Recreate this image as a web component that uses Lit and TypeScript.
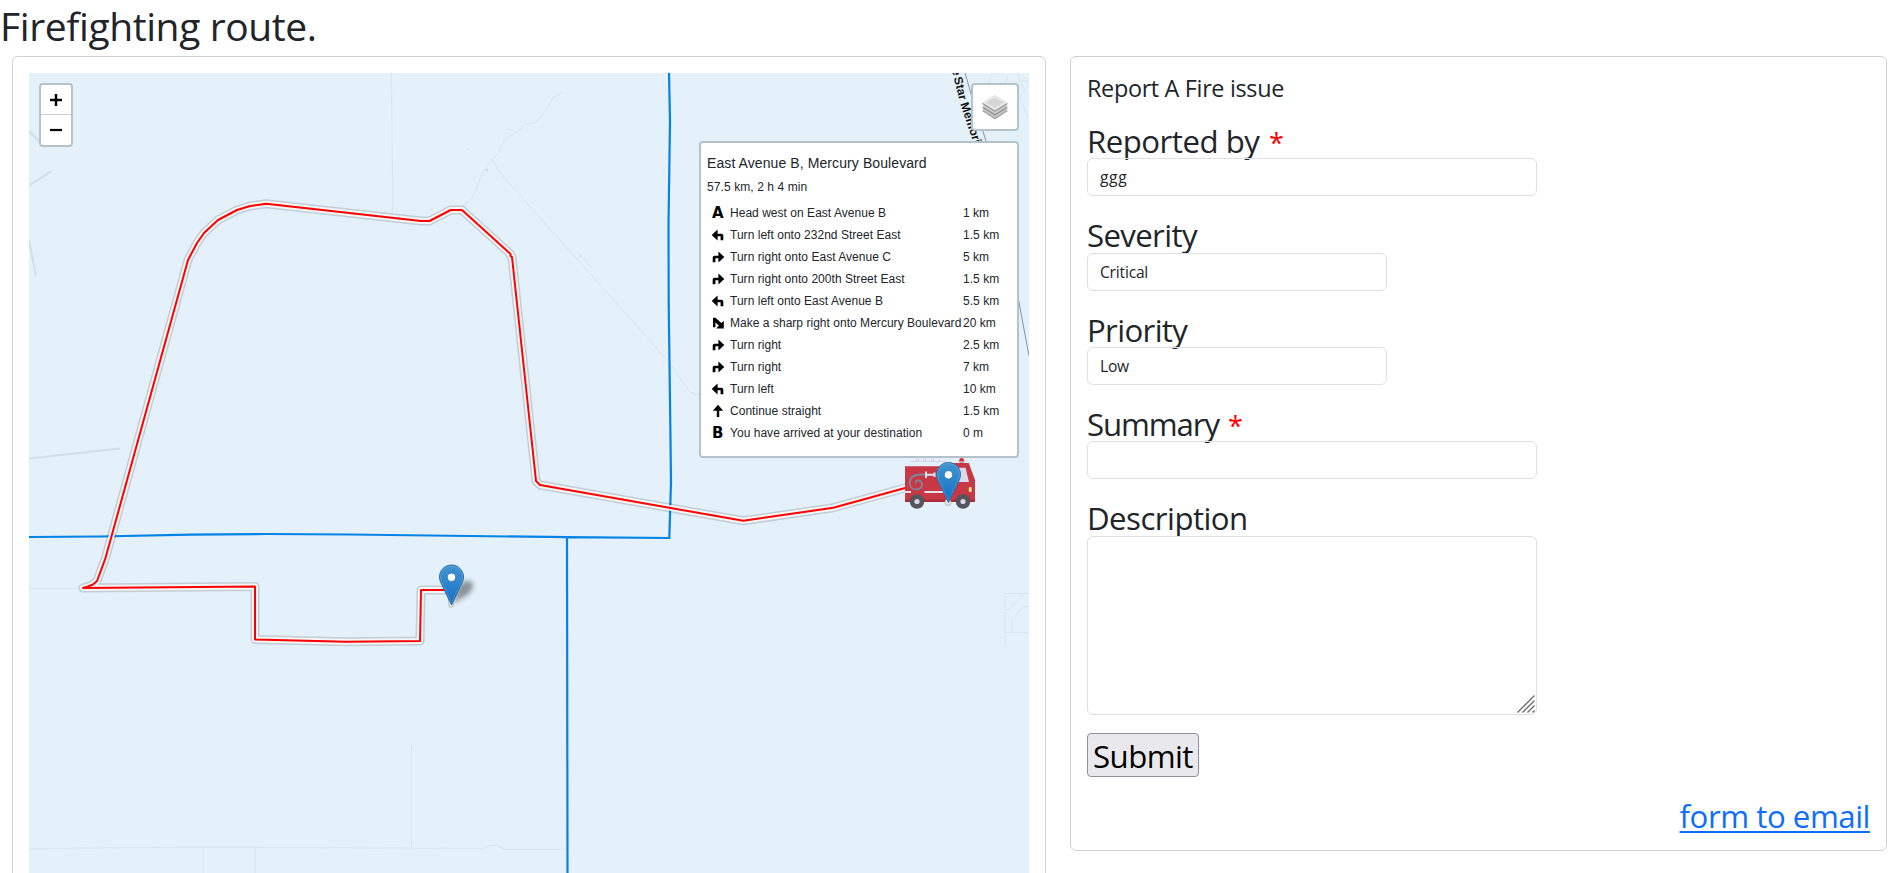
import {LitElement, html, css, svg} from "lit"
import {customElement, property} from "lit/decorators.js"

const ROUTE = "M938 479L905 488L833.3 507.7L743.3 520.8L540 485L536 481L512 257L510.5 256V254L462 210H450.7L429.5 221H421L266 203.7L250 206L237 210L218 220L204 233L197 243L188 260L105.4 558.3L97 581L93 584.5L88 586.5L83 588L255 586.5V639.5L346 641.8L420 641L421 590H451"

// Leaflet Routing Machine draws each leg three times: shadow, white casing, line
const ROUTE_STYLES = [
    {color: "#000", opacity: 0.15, weight: 9},
    {color: "#fff", opacity: 0.8, weight: 6},
    {color: "#f00", opacity: 1, weight: 2},
]

const STEPS = [
    {icon: "depart", text: "Head west on East Avenue B", distance: "1 km"},
    {icon: "left", text: "Turn left onto 232nd Street East", distance: "1.5 km"},
    {icon: "right", text: "Turn right onto East Avenue C", distance: "5 km"},
    {icon: "right", text: "Turn right onto 200th Street East", distance: "1.5 km"},
    {icon: "left", text: "Turn left onto East Avenue B", distance: "5.5 km"},
    {icon: "sharp-right", text: "Make a sharp right onto Mercury Boulevard", distance: "20 km"},
    {icon: "right", text: "Turn right", distance: "2.5 km"},
    {icon: "right", text: "Turn right", distance: "7 km"},
    {icon: "left", text: "Turn left", distance: "10 km"},
    {icon: "straight", text: "Continue straight", distance: "1.5 km"},
    {icon: "arrive", text: "You have arrived at your destination", distance: "0 m"},
]

const STEP_PATHS: any = {
    "left": "M-.3 5L5.600 -.4V3.700H9.500Q11.300 3.700 11.300 5.500V10.200H8.600V6.300H5.600V10.400Z",
    "right": "M12.300 5L6.400 -.4V3.700H2.500Q.7 3.700 .7 5.500V10.200H3.400V6.300H6.400V10.400Z",
    "sharp-right": "M1 -.3L3.400 -.3L9.400 5L11.800 2.800V10.400H4.200L6.900 7.600L3.400 4.600V9.200H1Z",
    "straight": "M6 -1.200L11.200 4.800H7.200V11H4.800V4.800H.8Z",
}

@customElement('step-icon')
export class StepIcon extends LitElement {
    static styles = css`
        :host {
            display: block;
            width: 12px;
            height: 22px;
            font: bold 15px/22px "DejaVu Sans", sans-serif;
            color: #000;
        }
        svg {
            display: block;
            width: 12px;
            height: 10px;
            padding-top: 6px;
            overflow: visible;
        }
    `;

    @property()
    type = ""

    render() {
        if (this.type === "depart") return html`A`
        if (this.type === "arrive") return html`B`
        return html`<svg viewBox="0 0 12 10"><path d=${STEP_PATHS[this.type]} /></svg>`
    }
}

@customElement('route-map')
export class RouteMap extends LitElement {
    static styles = css`
        :host {
            display: block;
            position: relative;
            height: 100%;
            overflow: hidden;
            background: #e4f1fa;
            color: #212529;
            font: 12px/18px "Liberation Sans", Arial, sans-serif;
        }
        .tiles {
            display: block;
            width: 1000px;
            height: 800px;
        }
        .road-name {
            font: bold 12px "Liberation Sans", Arial, sans-serif;
            fill: #111;
            stroke: #e4f1fa;
            stroke-width: 2px;
            paint-order: stroke;
        }
        .controls {
            position: absolute;
            top: 10px;
            border: 2px solid #b6c2ca;
            border-radius: 4px;
            box-sizing: border-box;
            background: #fff;
        }
        .zoom {
            left: 10px;
            width: 34px;
            height: 64px;
        }
        .zoom span {
            display: flex;
            align-items: center;
            justify-content: center;
            box-sizing: border-box;
            height: 30px;
        }
        .zoom span:first-child {
            border-bottom: 1px solid #ccc;
        }
        .zoom svg {
            width: 14px;
            height: 14px;
        }
        .layers {
            right: 10px;
            width: 48px;
            height: 48px;
            display: flex;
            align-items: center;
            justify-content: center;
        }
        .layers svg {
            width: 26px;
            height: 26px;
        }
        .directions {
            top: 68px;
            right: 10px;
            width: 320px;
            height: 317px;
            padding: 11px 6px;
        }
        h2 {
            margin: 0;
            font-weight: normal;
            font-size: 14px;
            line-height: 18px;
            letter-spacing: 0.09px;
        }
        h3 {
            margin: 6px 0;
            font-weight: normal;
            font-size: 12px;
            line-height: 18px;
            letter-spacing: 0.09px;
        }
        .step {
            display: grid;
            grid-template-columns: 18px 233px auto;
            padding-left: 5px;
            line-height: 22px;
            letter-spacing: 0.03px;
            white-space: nowrap;
        }
    `;

    pin(x: number, y: number) {
        return svg`
            <g transform="translate(${x} ${y})">
                <path d="M12.5.5C5.800.5.500 5.900.500 12.500c0 3 1.100 5.300 2.200 7.500L12.500 40.500l9.800-20.500c1.100-2.200 2.200-4.500 2.200-7.500C24.500 5.900 19.200.5 12.500.5z" fill="url(#pin)" stroke="#2e6fa3" />
                <path d="M12.500 1.600C6.400 1.600 1.600 6.500 1.600 12.500c0 2.700 1 4.900 2.100 7L12.500 38l8.800-18.500c1.100-2.100 2.100-4.300 2.100-7C23.400 6.500 18.600 1.600 12.500 1.600z" fill="none" stroke="#fff" stroke-opacity=".15" />
                <circle cx="12.500" cy="12.800" r="4.300" fill="#fff" stroke="#2f79b5" />
            </g>`
    }

    truck() {
        return svg`
            <g transform="translate(905 440)">
                <g fill="none" stroke="#d8d2ea">
                    <path d="M5 21.500H41M11.500 12V21M18.500 12V21M26.500 12V21M34.500 12V21" />
                    <path d="M13.500 16V21M20.500 16V21M28.500 16V21" />
                </g>
                <path d="M54.300 22V20.300Q54.300 18 56.600 18T59 20.300V22Z" fill="#f4202b" />
                <path d="M55 21H58.500V23.500H55Z" fill="#b9a6bb" />
                <path d="M0 26.300H44V23H63.800L70 40V62H0Z" fill="#c83745" />
                <path d="M0 59.500H70V62H0Z" fill="#ad2c3b" />
                <path d="M54 27.800H60.500L64 42H54Z" fill="#dcd9ea" />
                <path d="M0 51H6V53H0ZM19.500 51H38V53H19.500Z" fill="#e6e1f0" />
                <path d="M22 34.500H15Q4.500 35 4.700 43.500Q5.500 49.500 11.500 49.500Q17.300 49 17 44Q16 40 12.500 40.300Q10 41 11 43.500" fill="none" stroke="#7b8796" stroke-width="1.800" />
                <path d="M21 31.500V38M21 34.700H30M29.500 32.500V37" fill="none" stroke="#e6e1f0" stroke-width="2" />
                <rect x="63.800" y="47" width="2.800" height="5" rx="1" fill="#fbe87c" />
                <circle cx="12" cy="61.500" r="7.300" fill="#56555c" />
                <circle cx="12" cy="61.500" r="2.600" fill="#dad6e8" />
                <circle cx="58" cy="61.500" r="7.300" fill="#56555c" />
                <circle cx="58" cy="61.500" r="2.600" fill="#dad6e8" />
            </g>`
    }

    render() {
        return html`
            <svg class="tiles" viewBox="29 73 1000 800">
                <defs>
                    <linearGradient id="pin" x1="0" y1="0" x2="0" y2="1">
                        <stop offset="0" stop-color="#4295d1" />
                        <stop offset="1" stop-color="#126fc6" />
                    </linearGradient>
                    <filter id="soft" x="-50%" y="-50%" width="200%" height="200%">
                        <feGaussianBlur stdDeviation="2.800" />
                    </filter>
                </defs>

                <g fill="none" stroke="#d8e5ed" stroke-width="1">
                    <path d="M391.500 73L392.700 213M563 92L553 98L547 109L537 121Q534 124 525 124L517 132L505 139Q501 145 499 153L492 160L484 170L473 196Q468 204 462 206" />
                    <path d="M492 159Q497 170 501 174L668 361L690 392Q694 395 700 394M577 260L582 254M580 254L592 268M507 129L514 130.500M465 151L469 148" />
                    <path d="M29 588.500H78M29 849Q120 847 255 847.300L475 848.500L482 849Q490 844 497 845.500L504 849.300H567M203.500 847V873M255.500 847V873M411.500 746V848" />
                    <path d="M1029 593.500H1005V646M1005 632.500H1029M1005 609.500H1009L1022 596V593.500M1012 632V620L1023 606.500H1029" />
                    <path d="M993 73Q987 80 990 92M1006 73Q1010 80 1003 84M1018 78L1025 90L1020 97L1028 118M1016 73L1023 82L1029 80M1020 97H1012" />
                </g>
                <circle cx="487" cy="170" r="1.300" fill="#d0dce5" />
                <path d="M29 131L45 147M29 185.500L51 171.500M29 240L36 276M29 458.500L120 448.500" fill="none" stroke="#d3dfe6" stroke-width="2" />
                <path d="M965 73L974 104L988 147L1018 297L1029 356" fill="none" stroke="#87949d" />
                <path id="highway" d="M952 69.500L953 75L960 103L979 160" fill="none" />
                <text class="road-name"><textPath href="#highway">e<tspan dx="-1.500"> Star</tspan> Memori</textPath></text>

                <path d="M669 73L670 121L668.500 225L668.700 303L670.500 440L671 482L669.300 538L567 537.200L350 534.500L266 534L190 534.700L100 536.500L29 537M567 537L567.500 873" fill="none" stroke="#0383e5" stroke-width="2.200" />

                <path d="M451 590V605M948 495V503" fill="none" stroke="#000" stroke-opacity=".15" stroke-width="6" stroke-linecap="round" />
                <path d="M451 590V605M948 495V503" fill="none" stroke="#fff" stroke-opacity=".7" stroke-width="3" stroke-linecap="round" />
                ${ROUTE_STYLES.map(s => svg`
                    <path d=${ROUTE} fill="none" stroke=${s.color} stroke-opacity=${s.opacity}
                        stroke-width=${s.weight} stroke-linecap="round" stroke-linejoin="round" />
                `)}

                <path d="M452 604L459 586Q465 578 472 582Q476 588 467 595Z" fill="#000" fill-opacity=".4" filter="url(#soft)" />
                ${this.truck()}
                <circle cx="948" cy="502.500" r="3" fill="#e8ebee" stroke="#b9bec6" />
                ${this.pin(439, 564.5)}
                ${this.pin(936, 462)}
            </svg>

            <div class="controls zoom">
                <span><svg viewBox="0 0 14 14"><path d="M1 7H13M7 1V13" stroke="#000" stroke-width="2.400" /></svg></span>
                <span><svg viewBox="0 0 14 14"><path d="M1 7H13" stroke="#000" stroke-width="2.200" /></svg></span>
            </div>
            <div class="controls layers">
                <svg viewBox="0 0 26 26">
                    <path d="M0 17L13 25.500L26 17L13 11Z" fill="#a2a2a2" />
                    <path d="M0 15.700L13 24L26 15.700L13 9Z" fill="#c4c4c4" />
                    <path d="M0 13.500L13 21.500L26 13.500L13 7Z" fill="#8f8f8f" />
                    <path d="M0 12L13 20L26 12L13 5Z" fill="#cfcfcf" />
                    <path d="M0 9.800L13 17.700L26 9.800L13 3Z" fill="#8c8c8c" />
                    <path d="M0 8.600L13 16.400L26 8.600L13 .5Z" fill="#e9e9e9" />
                    <path d="M4 8.600L13 14L22 8.600L13 3.500Z" fill="#d6d6d6" />
                </svg>
            </div>
            <div class="controls directions">
                <h2>East Avenue B, Mercury Boulevard</h2>
                <h3>57.5 km, 2 h 4 min</h3>
                ${STEPS.map(step => html`
                    <div class="step">
                        <step-icon type=${step.icon}></step-icon>
                        <span>${step.text}</span>
                        <span>${step.distance}</span>
                    </div>
                `)}
            </div>
        `;
    }
}

@customElement('app-root')
export class AppRoot extends LitElement {
    static styles = css`
        :host {
            display: flex;
            flex-direction: column;
            box-sizing: border-box;
            height: 100vh;
            overflow: hidden;
            background: #fff;
            color: #212529;
            font-family: "Open Sans", "Noto Sans", sans-serif;
        }
        h1 {
            margin: 0 0 8px;
            font-size: 39px;
            font-weight: normal;
            line-height: 51px;
            height: 48px;
            letter-spacing: -0.4px;
        }
        .row {
            display: flex;
            align-items: flex-start;
            gap: 24px;
            padding-left: 12px;
        }
        .card {
            box-sizing: border-box;
            border: 1px solid #d0d0d1;
            border-radius: 6px;
            padding: 16px;
        }
        .map-card {
            width: 1034px;
            height: 834px;
        }
        .form-card {
            width: 817px;
            height: 795px;
        }
        h5 {
            margin: 0 0 17.8px;
            font-size: 23.4px;
            font-weight: normal;
            height: 29px;
            line-height: 31px;
            letter-spacing: -0.33px;
        }
        .field {
            margin-bottom: 18px;
        }
        label {
            display: block;
            height: 38.4px;
            font-size: 31.2px;
            line-height: 42.4px;
        }
        .required {
            color: red;
            letter-spacing: 0;
            font-size: 27px;
            line-height: 1;
            margin-left: 2px;
        }
        .control {
            position: relative;
            box-sizing: border-box;
            width: 450px;
            height: 38px;
            border: 1px solid #dedfe6;
            border-radius: 6px;
            padding: 6px 12px;
            font-size: 15.6px;
            line-height: 25px;
            letter-spacing: -0.2px;
        }
        .control.input {
            letter-spacing: 0.6px;
        }
        .control.select {
            width: 300px;
        }
        .control.textarea {
            height: 179px;
        }
        .grip {
            position: absolute;
            right: 1px;
            bottom: 1px;
            width: 18px;
            height: 18px;
        }
        button {
            display: block;
            box-sizing: border-box;
            width: 112px;
            height: 44px;
            padding: 2px 0 0;
            border: 1px solid #8f8f9d;
            border-radius: 4px;
            background: #e9e9ed;
            color: #000;
            font: 31.2px/40px "Open Sans", "Noto Sans", sans-serif;
            letter-spacing: -0.55px;
        }
        .footer {
            margin-top: 20px;
            text-align: right;
            font-size: 31.2px;
            line-height: 38px;
            letter-spacing: -0.46px;
        }
        a {
            color: #0d6efd;
            text-decoration: underline;
            text-decoration-thickness: 2px;
            text-underline-offset: 3px;
        }
    `;

    fields = [
        {label: "Reported by", kind: "input", value: "ggg", required: true, tracking: -0.5},
        {label: "Severity", kind: "select", value: "Critical", required: false, tracking: -0.65},
        {label: "Priority", kind: "select", value: "Low", required: false, tracking: -0.65},
        {label: "Summary", kind: "input", value: "", required: true, tracking: -1.1},
        {label: "Description", kind: "textarea", value: "", required: false, tracking: -0.53},
    ]

    render() {
        return html`
            <h1>Firefighting route.</h1>
            <div class="row">
                <div class="card map-card"><route-map></route-map></div>
                <div class="card form-card">
                    <h5>Report A Fire issue</h5>
                    ${this.fields.map(f => html`
                        <div class="field">
                            <label style="letter-spacing: ${f.tracking}px">${f.label}
                                ${f.required ? html`<span class="required">*</span>` : ""}
                            </label>
                            <div class="control ${f.kind}">
                                ${f.value}
                                ${f.kind === "textarea" ? html`
                                    <svg class="grip" viewBox="0 0 18 18">
                                        <path d="M.5 17.500L17.500 .5M5.500 17.500L17.500 5.500M10.500 17.500L17.500 10.500M15.500 17.500L17.500 15.500" stroke="#6b6b6b" stroke-width="1.300" />
                                    </svg>` : ""}
                            </div>
                        </div>
                    `)}
                    <button>Submit</button>
                    <div class="footer"><a href="#">form to email</a></div>
                </div>
            </div>
        `;
    }
}
